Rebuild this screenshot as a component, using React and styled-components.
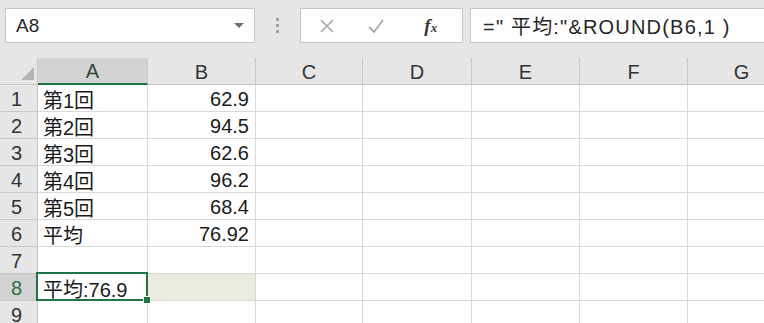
import React from 'react';
import styled, { createGlobalStyle } from 'styled-components';

const GlobalStyle = createGlobalStyle`
  html, body {
    margin: 0;
    padding: 0;
    background: #ffffff;
    overflow: hidden;
  }
  * { box-sizing: border-box; }
`;

const Page = styled.div`
  width: 764px;
  height: 323px;
  overflow: hidden;
  font-family: "Liberation Sans", "Noto Sans CJK JP", sans-serif;
  color: #1f1f1f;
`;

// formula bar
const Toolbar = styled.div`
  height: 58px;
  background: #e6e6e6;
  display: flex;
  align-items: flex-start;
  padding: 8px 0 0 5px;
`;

const NameBox = styled.div`
  width: 250px;
  height: 35px;
  background: #fff;
  border: 1px solid #c6c6c6;
  display: flex;
  align-items: center;
  justify-content: space-between;
  padding: 0 10px 0 10px;
  font-size: 19px;
  color: #262626;
`;

const Caret = styled.span`
  width: 0;
  height: 0;
  border-left: 5px solid transparent;
  border-right: 5px solid transparent;
  border-top: 5px solid #707070;
`;

const Dots = styled.div`
  width: 45px;
  height: 35px;
  display: flex;
  flex-direction: column;
  align-items: center;
  justify-content: center;
  gap: 3px;
  span {
    width: 3px;
    height: 3px;
    background: #a0a0a0;
  }
`;

const ButtonBox = styled.div`
  width: 163px;
  height: 35px;
  background: #fff;
  border: 1px solid #c6c6c6;
  display: flex;
  align-items: center;
  padding-left: 18px;
`;

const IconSlot = styled.div`
  width: 54px;
  height: 33px;
  display: flex;
  align-items: center;
`;

const Fx = styled.span`
  font-family: "Liberation Serif", serif;
  font-style: italic;
  font-weight: bold;
  font-size: 19px;
  color: #3a3a3a;
  margin-left: 10px;
  small {
    font-size: 13px;
  }
`;

const FormulaInput = styled.div`
  flex: 1;
  height: 35px;
  margin-left: 7px;
  background: #fff;
  border: 1px solid #c6c6c6;
  border-right: none;
  display: flex;
  align-items: center;
  padding-left: 12px;
  font-size: 20px;
  letter-spacing: 1.2px;
  color: #262626;
  white-space: pre;
`;

// sheet
const Sheet = styled.div`
  display: grid;
  grid-template-columns: 38px 110px 108px 107px 109px 108px 108px 108px;
  grid-auto-rows: 27px;
`;

const ColHead = styled.div`
  background: ${p => (p.$active ? '#d3d3d3' : '#e6e6e6')};
  border-right: 1px solid #c8c8c8;
  border-bottom: ${p => (p.$active ? '2px solid #217346' : '1px solid #c8c8c8')};
  display: flex;
  align-items: center;
  justify-content: center;
  font-size: 20px;
  padding-top: 2px;
  color: ${p => (p.$active ? '#2d4a3b' : '#333')};
`;

const Corner = styled.div`
  background: #e6e6e6;
  border-right: 1px solid #c8c8c8;
  border-bottom: 1px solid #c8c8c8;
  position: relative;
  svg {
    position: absolute;
    right: 3px;
    bottom: 4px;
  }
`;

const RowHead = styled.div`
  background: ${p => (p.$active ? '#d3d3d3' : '#e6e6e6')};
  border-right: 1px solid #c8c8c8;
  border-bottom: 1px solid #c8c8c8;
  display: flex;
  align-items: center;
  padding: 2px 0 0 11px;
  font-size: 20px;
  color: ${p => (p.$active ? '#217346' : '#333')};
`;

const Cell = styled.div`
  background: ${p => (p.$tint ? '#e9ecdf' : '#fff')};
  border-right: 1px solid #d9d9d9;
  border-bottom: 1px solid #d9d9d9;
  display: flex;
  align-items: center;
  justify-content: ${p => (p.$num ? 'flex-end' : 'flex-start')};
  padding: 2px 6px 0 5px;
  font-size: 20px;
  color: #1a1a1a;
  white-space: nowrap;
  position: relative;
  z-index: ${p => (p.$active ? 2 : 0)};
`;

const ActiveFrame = styled.div`
  position: absolute;
  left: -2px;
  top: -2px;
  right: -1px;
  bottom: -1px;
  border: 2px solid #217346;
  pointer-events: none;
`;

const FillHandle = styled.div`
  position: absolute;
  right: -5px;
  bottom: -5px;
  width: 8px;
  height: 8px;
  background: #217346;
  border: 1px solid #fff;
`;

const columns = ['A', 'B', 'C', 'D', 'E', 'F', 'G'];

const rows = [
  ['第1回', '62.9'],
  ['第2回', '94.5'],
  ['第3回', '62.6'],
  ['第4回', '96.2'],
  ['第5回', '68.4'],
  ['平均', '76.92'],
  ['', ''],
  ['平均:76.9', ''],
  ['', ''],
];

const App = () => {
  return (
    <Page>
      <GlobalStyle />
      <Toolbar>
        <NameBox>
          <span>A8</span>
          <Caret />
        </NameBox>
        <Dots>
          <span />
          <span />
          <span />
        </Dots>
        <ButtonBox>
          <IconSlot>
            <svg width="16" height="16" viewBox="0 0 16 16">
              <path d="M2 2 L14 14 M14 2 L2 14" stroke="#a8a8a8" strokeWidth="1.6" fill="none" />
            </svg>
          </IconSlot>
          <IconSlot>
            <svg width="18" height="16" viewBox="0 0 18 16">
              <path d="M2 9 L7 14 L16 2" stroke="#a8a8a8" strokeWidth="1.8" fill="none" />
            </svg>
          </IconSlot>
          <IconSlot>
            <Fx>f<small>x</small></Fx>
          </IconSlot>
        </ButtonBox>
        <FormulaInput>{'=" 平均:"&ROUND(B6,1 )'}</FormulaInput>
      </Toolbar>
      <Sheet>
        <Corner>
          <svg width="13" height="13" viewBox="0 0 13 13">
            <path d="M13 0 L13 13 L0 13 Z" fill="#b4b4b4" />
          </svg>
        </Corner>
        {columns.map(c => (
          <ColHead key={c} $active={c === 'A'}>{c}</ColHead>
        ))}
        {rows.map((r, i) => {
          const n = i + 1;
          const isActive = n === 8;
          return (
            <React.Fragment key={n}>
              <RowHead $active={isActive}>{n}</RowHead>
              <Cell $active={isActive}>
                {r[0]}
                {isActive && (
                  <ActiveFrame>
                    <FillHandle />
                  </ActiveFrame>
                )}
              </Cell>
              <Cell $num $tint={isActive}>{r[1]}</Cell>
              {columns.slice(2).map(c => (
                <Cell key={c} />
              ))}
            </React.Fragment>
          );
        })}
      </Sheet>
    </Page>
  );
};

export default App;
